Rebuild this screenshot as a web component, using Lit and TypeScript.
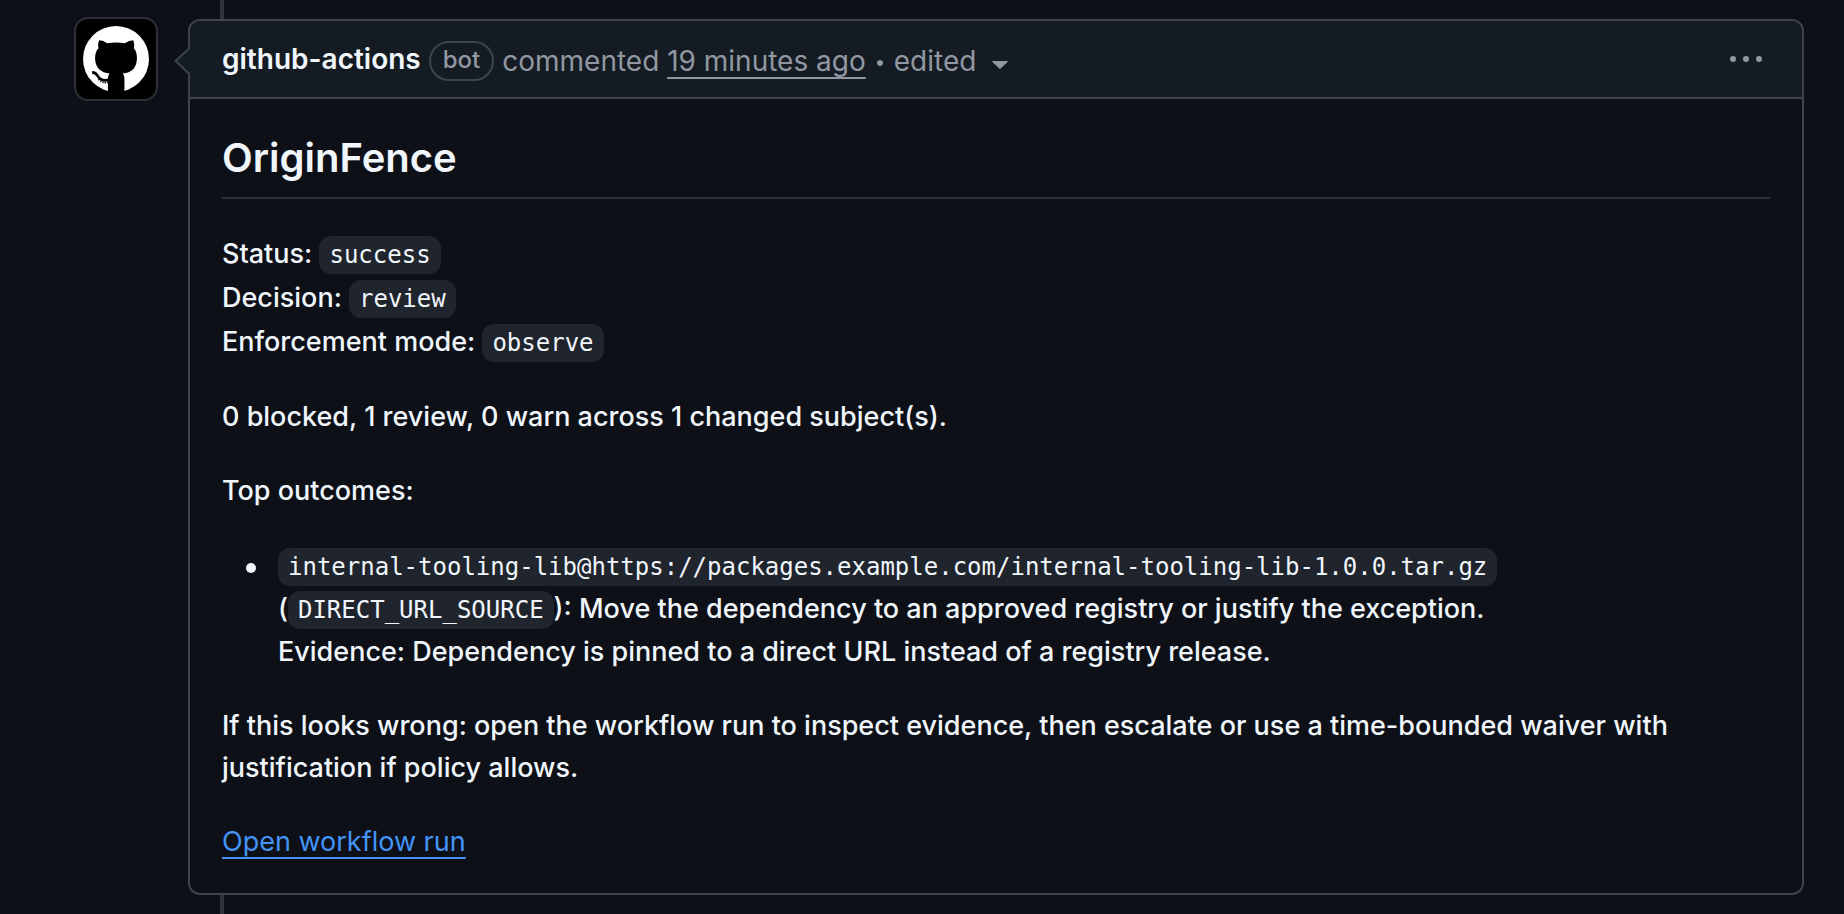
import { LitElement, html, css } from "lit";
import { customElement } from "lit/decorators.js";

@customElement("app-root")
export class AppRoot extends LitElement {
  static styles = css`
    :host {
      display: block;
      min-height: 100vh;
      box-sizing: border-box;
      background: #0d1117;
      color: #f0f6fc;
      font: 450 27px/42px Inter, "Liberation Sans", sans-serif;
    }
    .timeline {
      display: grid;
      grid-template-columns: 84px minmax(0, 1fr);
      column-gap: 30px;
      padding: 0 40px 0 74px;
      min-height: 100vh;
    }
    .avatar {
      margin-top: 17px;
      width: 80px;
      height: 80px;
      border: 2px solid #2c3036;
      border-radius: 14px;
      background: #000;
      display: flex;
      align-items: center;
      justify-content: center;
    }
    .thread {
      display: flex;
      flex-direction: column;
    }
    .rail {
      width: 4px;
      margin-left: 32px;
      background: #2f353d;
    }
    .rail-top { height: 19px; }
    .rail-bottom { flex: 1; min-height: 19px; }
    .card {
      position: relative;
      border: 2px solid #3d444d;
      border-radius: 12px;
    }
    .arrow {
      position: absolute;
      left: -16px;
      top: 25px;
    }
    .head {
      display: flex;
      align-items: center;
      justify-content: space-between;
      height: 76px;
      padding: 0 32px;
      background: #151b23;
      border-bottom: 2px solid #3d444d;
      border-radius: 10px 10px 0 0;
      color: #9198a1;
    }
    .meta {
      display: flex;
      align-items: center;
      gap: 8px;
      padding-top: 4px;
      font-size: 28px;
      font-weight: 400;
      white-space: nowrap;
    }
    a { color: inherit; text-decoration: none; }
    .author { color: #f0f6fc; font-weight: 600; padding-bottom: 4px; }
    .pill {
      box-sizing: border-box;
      height: 40px;
      padding: 0 12px;
      border: 2px solid #3d444d;
      border-radius: 20px;
      font-size: 24px;
      line-height: 34px;
      font-weight: 500;
    }
    .dot {
      width: 6px;
      height: 6px;
      margin: 4px 3px 0;
      border-radius: 50%;
      background: currentColor;
    }
    .caret { margin-top: 8px; }
    .time, .more-link {
      text-decoration: underline;
      text-decoration-thickness: 2px;
      text-underline-offset: 6px;
      text-decoration-skip-ink: none;
    }
    button {
      display: flex;
      align-items: center;
      gap: 16px;
      padding: 0;
      border: 0;
      background: none;
      color: inherit;
      font: inherit;
      cursor: pointer;
    }
    .menu { padding: 8px; }
    .body { padding: 32px 32px 30px; }
    h2 {
      margin: 0 0 33px;
      padding-bottom: 12px;
      border-bottom: 2px solid #2c323a;
      font-size: 40px;
      line-height: 54px;
      font-weight: 600;
    }
    p { margin: 0 0 32px; }
    p:last-child { margin-bottom: 0; }
    .fields { line-height: 44px; }
    code {
      padding: 5px 10px;
      border-radius: 12px;
      background: #20242c;
      font: 24px/1 "DejaVu Sans Mono", monospace;
    }
    ul {
      margin: 0 0 32px;
      padding-left: 56px;
      list-style: none;
      line-height: 43px;
    }
    li::before {
      content: "";
      display: inline-block;
      width: 10px;
      height: 10px;
      margin: 0 22px 0 -32px;
      border-radius: 50%;
      background: currentColor;
      vertical-align: middle;
    }
    .more-link { color: #4493f8; font-weight: 400; }
  `;

  render() {
    return html`
      <main class="timeline">
        <a class="avatar" href="#" aria-label="github-actions">
          <svg width="66" height="66" viewBox="0 0 196 196" aria-hidden="true">
            <circle cx="98" cy="98" r="98" fill="#fff"/>
            <path d="M48 42Q60 42 72 51Q98 47 124 51Q138 42 149 42Q154 52 151 66Q161 77 160 98C159 122 148 138 118 141Q123 147 123 156V197H74V156Q74 147 79 141C50 138 37 122 36 98Q35 77 46 66Q43 52 48 42Z" fill="#000"/>
            <path d="M27 138Q38 138 44 149Q53 165 76 160" fill="none" stroke="#000" stroke-width="8"/>
            <path d="M46 158Q58 171 76 167" fill="none" stroke="#000" stroke-width="5" stroke-dasharray="4 3"/>
          </svg>
        </a>
        <div class="thread">
          <div class="rail rail-top"></div>
          <article class="card">
            <svg class="arrow" width="16" height="30" viewBox="0 0 16 30" aria-hidden="true">
              <path d="M16 1.500L1.500 15L16 28.500Z" fill="#151b23"/>
              <path d="M15.500 2L1.500 15L15.500 28" fill="none" stroke="#3d444d" stroke-width="2"/>
            </svg>
            <header class="head">
              <div class="meta">
                <a class="author" href="#">github-actions</a>
                <span class="pill">bot</span>
                <span>commented <a class="time" href="#">19 minutes ago</a></span>
                <span class="dot"></span>
                <button type="button">edited
                  <svg class="caret" width="16" height="8" viewBox="0 0 16 8" fill="currentColor" aria-hidden="true"><path d="M1 0h14q1.500 0 .5 1L8.700 7.600q-.7.600-1.400 0L.5 1Q-.5 0 1 0z"/></svg>
                </button>
              </div>
              <button class="menu" type="button" aria-label="Show options">
                <svg width="32" height="6" viewBox="0 0 32 6" fill="currentColor" aria-hidden="true"><circle cx="3" cy="3" r="3"/><circle cx="16" cy="3" r="3"/><circle cx="29" cy="3" r="3"/></svg>
              </button>
            </header>
            <div class="body">
              <h2>OriginFence</h2>
              <p class="fields">Status: <code>success</code><br>Decision: <code>review</code><br>Enforcement mode: <code>observe</code></p>
              <p>0 blocked, 1 review, 0 warn across 1 changed subject(s).</p>
              <p>Top outcomes:</p>
              <ul>
                <li><code>internal-tooling-lib@https://packages.example.com/internal-tooling-lib-1.0.0.tar.gz</code><br>(<code>DIRECT_URL_SOURCE</code>): Move the dependency to an approved registry or justify the exception.<br>Evidence: Dependency is pinned to a direct URL instead of a registry release.</li>
              </ul>
              <p>If this looks wrong: open the workflow run to inspect evidence, then escalate or use a time-bounded waiver with justification if policy allows.</p>
              <p><a class="more-link" href="#">Open workflow run</a></p>
            </div>
          </article>
          <div class="rail rail-bottom"></div>
        </div>
      </main>
    `;
  }
}
